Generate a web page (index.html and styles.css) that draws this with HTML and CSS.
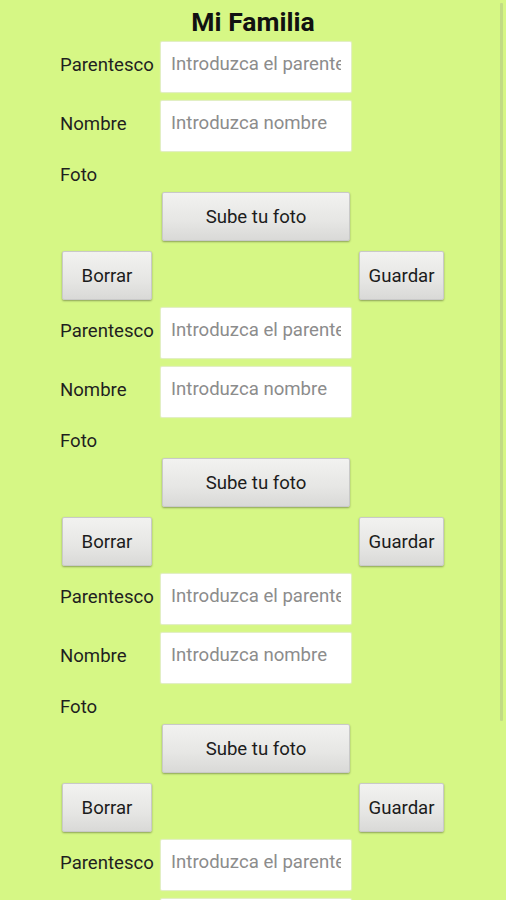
FILE: index.html
```html
<!DOCTYPE html>
<html lang="es">
<head>
<meta charset="utf-8">
<title>Mi Familia</title>
<link rel="stylesheet" href="styles.css">
</head>
<body>
<div class="screen">
  <h1 class="title">Mi Familia</h1>
  <div class="list">
    <section class="entry">
      <div class="row row-first"><label class="label">Parentesco</label><input class="field" type="text" placeholder="Introduzca el parentesco"></div>
      <div class="row"><label class="label">Nombre</label><input class="field" type="text" placeholder="Introduzca nombre"></div>
      <div class="foto-label">Foto</div>
      <div class="upload-row"><button class="btn btn-upload">Sube tu foto</button></div>
      <div class="actions"><button class="btn btn-borrar">Borrar</button><button class="btn btn-guardar">Guardar</button></div>
    </section>
    <section class="entry">
      <div class="row row-first"><label class="label">Parentesco</label><input class="field" type="text" placeholder="Introduzca el parentesco"></div>
      <div class="row"><label class="label">Nombre</label><input class="field" type="text" placeholder="Introduzca nombre"></div>
      <div class="foto-label">Foto</div>
      <div class="upload-row"><button class="btn btn-upload">Sube tu foto</button></div>
      <div class="actions"><button class="btn btn-borrar">Borrar</button><button class="btn btn-guardar">Guardar</button></div>
    </section>
    <section class="entry">
      <div class="row row-first"><label class="label">Parentesco</label><input class="field" type="text" placeholder="Introduzca el parentesco"></div>
      <div class="row"><label class="label">Nombre</label><input class="field" type="text" placeholder="Introduzca nombre"></div>
      <div class="foto-label">Foto</div>
      <div class="upload-row"><button class="btn btn-upload">Sube tu foto</button></div>
      <div class="actions"><button class="btn btn-borrar">Borrar</button><button class="btn btn-guardar">Guardar</button></div>
    </section>
    <section class="entry">
      <div class="row row-first"><label class="label">Parentesco</label><input class="field" type="text" placeholder="Introduzca el parentesco"></div>
      <div class="row"><label class="label">Nombre</label><input class="field" type="text" placeholder="Introduzca nombre"></div>
    </section>
  </div>
  <div class="scrollbar"></div>
</div>
</body>
</html>
```
FILE: styles.css
```css
* { box-sizing: border-box; }
html, body {
  margin: 0;
  padding: 0;
  height: 100%;
  overflow: hidden;
}
body {
  background: #d6f785;
  font-family: Roboto, "Noto Sans", sans-serif;
  color: #1f1f1f;
}
.screen {
  position: relative;
  height: 900px;
  overflow: hidden;
}
.title {
  margin: 0;
  height: 42px;
  line-height: 43px;
  text-align: center;
  font-size: 26.5px;
  font-weight: bold;
  color: #111;
}
.list {
  padding-left: 60px;
  display: flex;
  flex-direction: column;
}
.entry {
  display: flex;
  flex-direction: column;
}
.row {
  display: flex;
  align-items: center;
  height: 50px;
}
.row-first {
  margin-bottom: 9px;
}
.label {
  width: 101px;
  font-size: 18.6px;
  line-height: 22px;
  margin-top: -4px;
  color: #1f1f1f;
  white-space: nowrap;
}
.field {
  width: 190px;
  height: 50px;
  border: none;
  border-radius: 1px;
  background: #fff;
  box-shadow: 0 0 1px 1px #e4eecb;
  padding: 0 10px 6px 10px;
  font-family: Roboto, "Noto Sans", sans-serif;
  font-size: 18.6px;
  color: #222;
  outline: none;
}
.field::placeholder {
  color: #8c8c8c;
}
.foto-label {
  height: 41px;
  font-size: 18.6px;
  line-height: 22px;
  padding-top: 13px;
}
.upload-row {
  padding-left: 102px;
  margin-bottom: 10px;
}
.btn {
  font-family: Roboto, "Noto Sans", sans-serif;
  font-size: 18.6px;
  color: #1c1c1c;
  height: 49px;
  border: 1px solid #c9c9c9;
  border-radius: 2px;
  background: linear-gradient(#f2f2f0, #e6e6e4 60%, #d9d9d7);
  box-shadow: 0 1px 2px rgba(0,0,0,0.35);
  padding: 0;
}
.btn-upload { width: 188px; }
.actions {
  display: flex;
  justify-content: space-between;
  width: 384px;
  padding-left: 2px;
  margin-bottom: 8px;
}
.btn-borrar { width: 90px; }
.btn-guardar { width: 85px; }
.scrollbar {
  position: absolute;
  top: 3px;
  right: 3px;
  width: 3px;
  height: 718px;
  background: #c2dc86;
  border-radius: 1px;
}
```
